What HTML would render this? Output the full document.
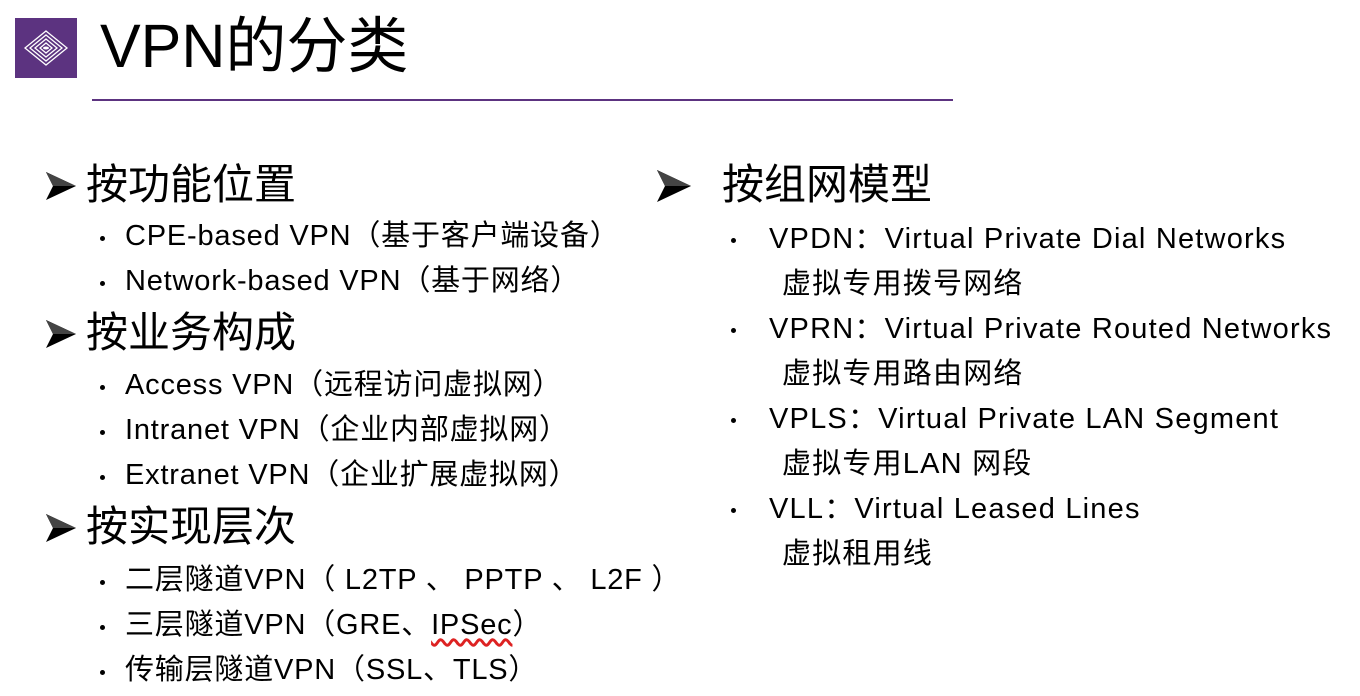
<!DOCTYPE html>
<html><head><meta charset="utf-8"><style>
*{margin:0;padding:0}
body{width:1360px;height:696px;background:#fff;position:relative;overflow:hidden;font-family:"Liberation Sans","Noto Sans CJK SC",sans-serif;color:#000}
.t{position:absolute;white-space:nowrap}
.h{font-size:42px;line-height:50px}
.i{font-size:29px;line-height:36px;letter-spacing:1.2px}
.l{letter-spacing:0.8px}
.b{position:absolute;width:5px;height:5px;border-radius:50%;background:#000}
.ar{position:absolute}
.wavy{text-decoration:underline wavy #d22;text-underline-offset:4px}
</style></head><body>
<div style="position:absolute;left:15px;top:18px;width:62px;height:60px;background:#5c3380">
<svg width="62" height="60" viewBox="0 0 62 60">
<g fill="none" stroke="#fff" stroke-width="1.3">
<path d="M31 13 L52 30 L31 47 L10 30 Z"/>
<path d="M31 17 L47 30 L31 43 L15 30 Z"/>
<path d="M31 21 L42 30 L31 39 L20 30 Z"/>
<path d="M31 25 L37 30 L31 35 L25 30 Z"/>
</g><ellipse cx="31" cy="30" rx="3" ry="1.5" fill="#fff"/></svg></div>
<div class="t" style="left:100px;top:10px;font-size:61px;line-height:72px">VPN的分类</div>
<div style="position:absolute;left:92px;top:99px;width:861px;height:2px;background:#5c3380"></div>

<svg class="ar" style="left:46px;top:172px" width="30" height="28" viewBox="0 0 30 28"><path d="M0 0 L30 14 L0 28 L7 14 Z" fill="#000"/><path d="M0 0 L30 14 L7 14 Z" fill="#444"/></svg>
<div class="t h" style="left:86px;top:160px">按功能位置</div>
<div class="b" style="left:100px;top:236px"></div><div class="t i l" style="left:125px;top:218px">CPE-based VPN（基于客户端设备）</div>
<div class="b" style="left:100px;top:281px"></div><div class="t i l" style="left:125px;top:263px">Network-based VPN（基于网络）</div>
<svg class="ar" style="left:46px;top:320px" width="30" height="28" viewBox="0 0 30 28"><path d="M0 0 L30 14 L0 28 L7 14 Z" fill="#000"/><path d="M0 0 L30 14 L7 14 Z" fill="#444"/></svg>
<div class="t h" style="left:86px;top:308px">按业务构成</div>
<div class="b" style="left:100px;top:385px"></div><div class="t i l" style="left:125px;top:367px">Access VPN（远程访问虚拟网）</div>
<div class="b" style="left:100px;top:430px"></div><div class="t i l" style="left:125px;top:412px">Intranet VPN（企业内部虚拟网）</div>
<div class="b" style="left:100px;top:475px"></div><div class="t i l" style="left:125px;top:457px">Extranet VPN（企业扩展虚拟网）</div>
<svg class="ar" style="left:46px;top:514px" width="30" height="28" viewBox="0 0 30 28"><path d="M0 0 L30 14 L0 28 L7 14 Z" fill="#000"/><path d="M0 0 L30 14 L7 14 Z" fill="#444"/></svg>
<div class="t h" style="left:86px;top:502px">按实现层次</div>
<div class="b" style="left:100px;top:580px"></div><div class="t i l" style="left:125px;top:562px">二层隧道VPN（ L2TP 、 PPTP 、 L2F ）</div>
<div class="b" style="left:100px;top:625px"></div><div class="t i l" style="left:125px;top:607px">三层隧道VPN（GRE、<span class="wavy">IPSec</span>）</div>
<div class="b" style="left:100px;top:670px"></div><div class="t i l" style="left:125px;top:652px">传输层隧道VPN（SSL、TLS）</div>

<svg class="ar" style="left:657px;top:170px" width="34" height="32" viewBox="0 0 34 32"><path d="M0 0 L34 16 L0 32 L8 16 Z" fill="#000"/><path d="M0 0 L34 16 L8 16 Z" fill="#444"/></svg>
<div class="t h" style="left:722px;top:160px">按组网模型</div>
<div class="b" style="left:731px;top:238px"></div><div class="t i" style="left:769px;top:221px">VPDN：Virtual Private Dial Networks</div>
<div class="t i" style="left:782px;top:266px">虚拟专用拨号网络</div>
<div class="b" style="left:731px;top:328px"></div><div class="t i" style="left:769px;top:311px">VPRN：Virtual Private Routed Networks</div>
<div class="t i" style="left:782px;top:356px">虚拟专用路由网络</div>
<div class="b" style="left:731px;top:418px"></div><div class="t i" style="left:769px;top:401px">VPLS：Virtual Private LAN Segment</div>
<div class="t i" style="left:782px;top:446px">虚拟专用LAN 网段</div>
<div class="b" style="left:731px;top:508px"></div><div class="t i" style="left:769px;top:491px">VLL：Virtual Leased Lines</div>
<div class="t i" style="left:782px;top:536px">虚拟租用线</div>
</body></html>
